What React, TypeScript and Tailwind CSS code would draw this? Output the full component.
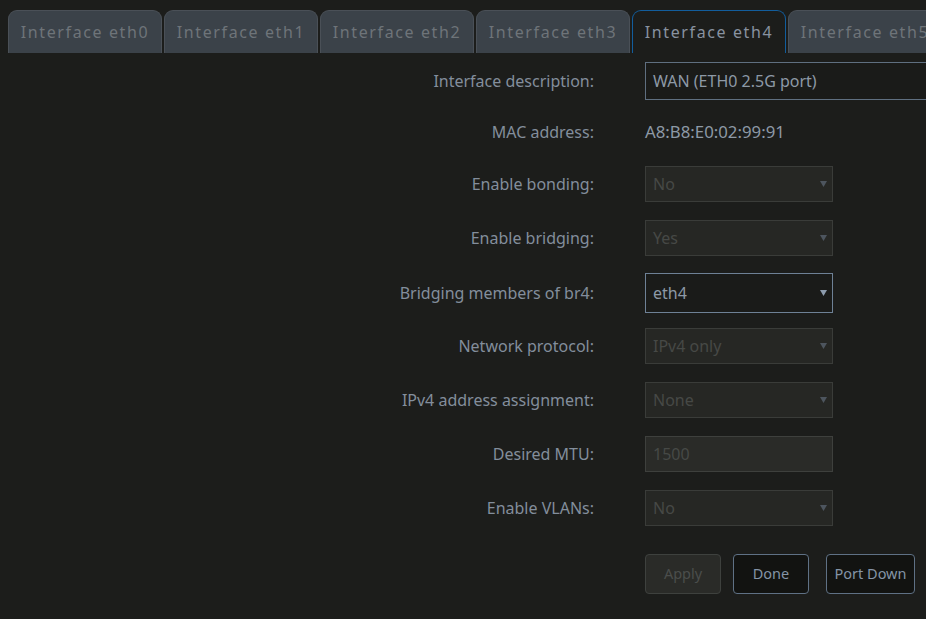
import React from 'react';

const tabs = ['eth0', 'eth1', 'eth2', 'eth3', 'eth4', 'eth5'];
const active = 'eth4';

function Arrow({ on }: { on?: boolean }) {
  return (
    <svg width="7" height="6" viewBox="0 0 7 6" className="absolute right-[5px] top-1/2 -translate-y-1/2">
      <path d="M0 0H7L3.5 6Z" fill={on ? '#8d9cad' : '#4d555e'} />
    </svg>
  );
}

function Select({ value, on }: { value: string; on?: boolean }) {
  return (
    <div
      className={
        on
          ? 'relative flex h-[40px] w-[188px] items-center border border-[#6e8196] bg-[#1a1b19] pl-[7px] text-[#8d99a6]'
          : 'relative flex h-[36px] w-[188px] items-center border border-[#3a3c39] bg-[#262724] pl-[7px] text-[#464946]'
      }
    >
      {value}
      <Arrow on={on} />
    </div>
  );
}

function Row({ label, children, className }: { label: string; children: React.ReactNode; className?: string }) {
  return (
    <div className={'flex items-center ' + (className ?? '')}>
      <div className="w-[594px] shrink-0 text-right text-[#838e9c]">{label}</div>
      <div className="ml-[51px]">{children}</div>
    </div>
  );
}

export default function App() {
  return (
    <div className="h-[619px] w-[926px] overflow-hidden bg-[#1c1d1b] text-[16px] font-['Noto_Sans',sans-serif]">
      <div className="flex gap-[2px] pl-[8px] pt-[10px]">
        {tabs.map((t) => (
          <div
            key={t}
            className={
              t === active
                ? 'flex h-[43px] w-[154px] shrink-0 items-center justify-center rounded-t-[9px] border border-b-0 border-[#125d9c] bg-[#1c1d1b] tracking-[1.6px] text-[#8892a0]'
                : 'flex h-[43px] w-[154px] shrink-0 items-center justify-center rounded-t-[9px] border border-b-0 border-[#4a5057] bg-[#3b4249] tracking-[1.6px] text-[#6e7479]'
            }
          >
            Interface {t}
          </div>
        ))}
      </div>

      <div className="pt-[9px]">
        <Row label="Interface description:" className="h-[38px]">
          <div className="flex h-[38px] w-[300px] items-center border border-r-0 border-[#5f6f80] bg-[#1a1b19] pl-[7px] text-[#8d99a6]">
            WAN (ETH0 2.5G port)
          </div>
        </Row>
        <Row label="MAC address:" className="mt-[14px] h-[36px]">
          <span className="text-[16.8px] text-[#8d99a6]">A8:B8:E0:02:99:91</span>
        </Row>
        <Row label="Enable bonding:" className="mt-[16px]">
          <Select value="No" />
        </Row>
        <Row label="Enable bridging:" className="mt-[18px]">
          <Select value="Yes" />
        </Row>
        <Row label="Bridging members of br4:" className="mt-[17px]">
          <Select value="eth4" on />
        </Row>
        <Row label="Network protocol:" className="mt-[15px]">
          <Select value="IPv4 only" />
        </Row>
        <Row label="IPv4 address assignment:" className="mt-[18px]">
          <Select value="None" />
        </Row>
        <Row label="Desired MTU:" className="mt-[18px]">
          <div className="flex h-[36px] w-[188px] items-center border border-[#3e403d] bg-[#2a2b28] pl-[7px] text-[#464946]">
            1500
          </div>
        </Row>
        <Row label="Enable VLANs:" className="mt-[18px]">
          <Select value="No" />
        </Row>
        <div className="mt-[28px] flex pl-[645px] text-[14.5px]">
          <button className="h-[40px] w-[76px] rounded-[4px] border border-[#3e413e] bg-[#2a2b28] text-[#4b4e4c]">
            Apply
          </button>
          <button className="ml-[12px] h-[40px] w-[76px] rounded-[4px] border border-[#5f7185] bg-[#121311] text-[#8494a6]">
            Done
          </button>
          <button className="ml-[17px] h-[40px] w-[89px] rounded-[4px] border border-[#5f7185] bg-[#121311] text-[#8494a6]">
            Port Down
          </button>
        </div>
      </div>
    </div>
  );
}
